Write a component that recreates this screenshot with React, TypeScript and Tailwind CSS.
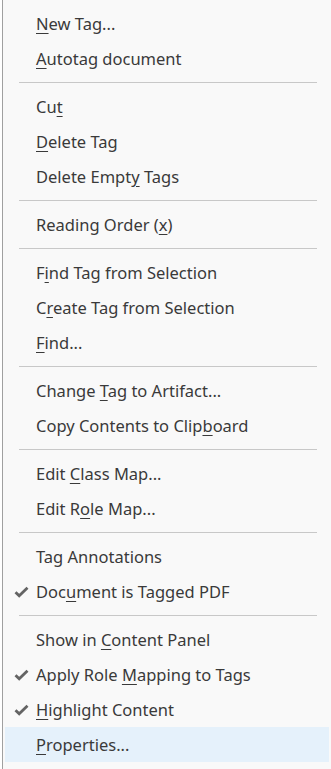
import type { ReactNode } from 'react';

type Item =
  | { kind: 'sep' }
  | { kind: 'item'; label: ReactNode; checked?: boolean; active?: boolean };

function u(before: string, key: string, after: string) {
  return (
    <>
      {before}
      <span className="underline underline-offset-[3px] decoration-[1px]">{key}</span>
      {after}
    </>
  );
}

const items: Item[] = [
  { kind: 'item', label: u('', 'N', 'ew Tag...') },
  { kind: 'item', label: u('', 'A', 'utotag document') },
  { kind: 'sep' },
  { kind: 'item', label: u('Cu', 't', '') },
  { kind: 'item', label: u('', 'D', 'elete Tag') },
  { kind: 'item', label: u('Delete Empt', 'y', ' Tags') },
  { kind: 'sep' },
  { kind: 'item', label: u('Reading Order (', 'x', ')') },
  { kind: 'sep' },
  { kind: 'item', label: u('F', 'i', 'nd Tag from Selection') },
  { kind: 'item', label: u('C', 'r', 'eate Tag from Selection') },
  { kind: 'item', label: u('', 'F', 'ind...') },
  { kind: 'sep' },
  { kind: 'item', label: u('Change ', 'T', 'ag to Artifact...') },
  { kind: 'item', label: u('Copy Contents to Clip', 'b', 'oard') },
  { kind: 'sep' },
  { kind: 'item', label: u('Edit ', 'C', 'lass Map...') },
  { kind: 'item', label: u('Edit R', 'o', 'le Map...') },
  { kind: 'sep' },
  { kind: 'item', label: 'Tag Annotations' },
  { kind: 'item', label: u('Doc', 'u', 'ment is Tagged PDF'), checked: true },
  { kind: 'sep' },
  { kind: 'item', label: u('Show in ', 'C', 'ontent Panel') },
  { kind: 'item', label: u('Apply Role ', 'M', 'apping to Tags'), checked: true },
  { kind: 'item', label: u('', 'H', 'ighlight Content'), checked: true },
  { kind: 'item', label: u('', 'P', 'roperties...'), active: true },
];

function Check() {
  return (
    <svg width="15" height="12" viewBox="0 0 15 12" className="shrink-0">
      <path d="M1.5 6.2 L5.2 9.8 L13.5 1.8" fill="none" stroke="#646464" strokeWidth="2.8" />
    </svg>
  );
}

export default function App() {
  return (
    <div
      className="flex h-[769px] w-[331px] bg-white"
      style={{ fontFamily: '"Noto Sans", "Open Sans", sans-serif' }}
    >
      <div className="w-[2px] bg-white" />
      <div className="w-px bg-[#a0a0a0]" />
      <div className="flex flex-1 flex-col bg-[#f9f9f9] pt-[6px] pl-[2px] pr-[2px]">
        {items.map((it, i) =>
          it.kind === 'sep' ? (
            <div key={i} className="flex h-[13px] items-center pl-[14px] pr-[12px]">
              <div className="h-px w-full bg-[#c8c8c8]" />
            </div>
          ) : (
            <div
              key={i}
              className={`flex h-[35px] items-center pt-px text-[16.5px] text-[#3a3a3a] ${
                it.active ? 'bg-[#e5f1fb]' : ''
              }`}
            >
              <div className="flex w-[31px] justify-center pl-[2px]">{it.checked && <Check />}</div>
              <span className="whitespace-nowrap">{it.label}</span>
            </div>
          )
        )}
      </div>
    </div>
  );
}
